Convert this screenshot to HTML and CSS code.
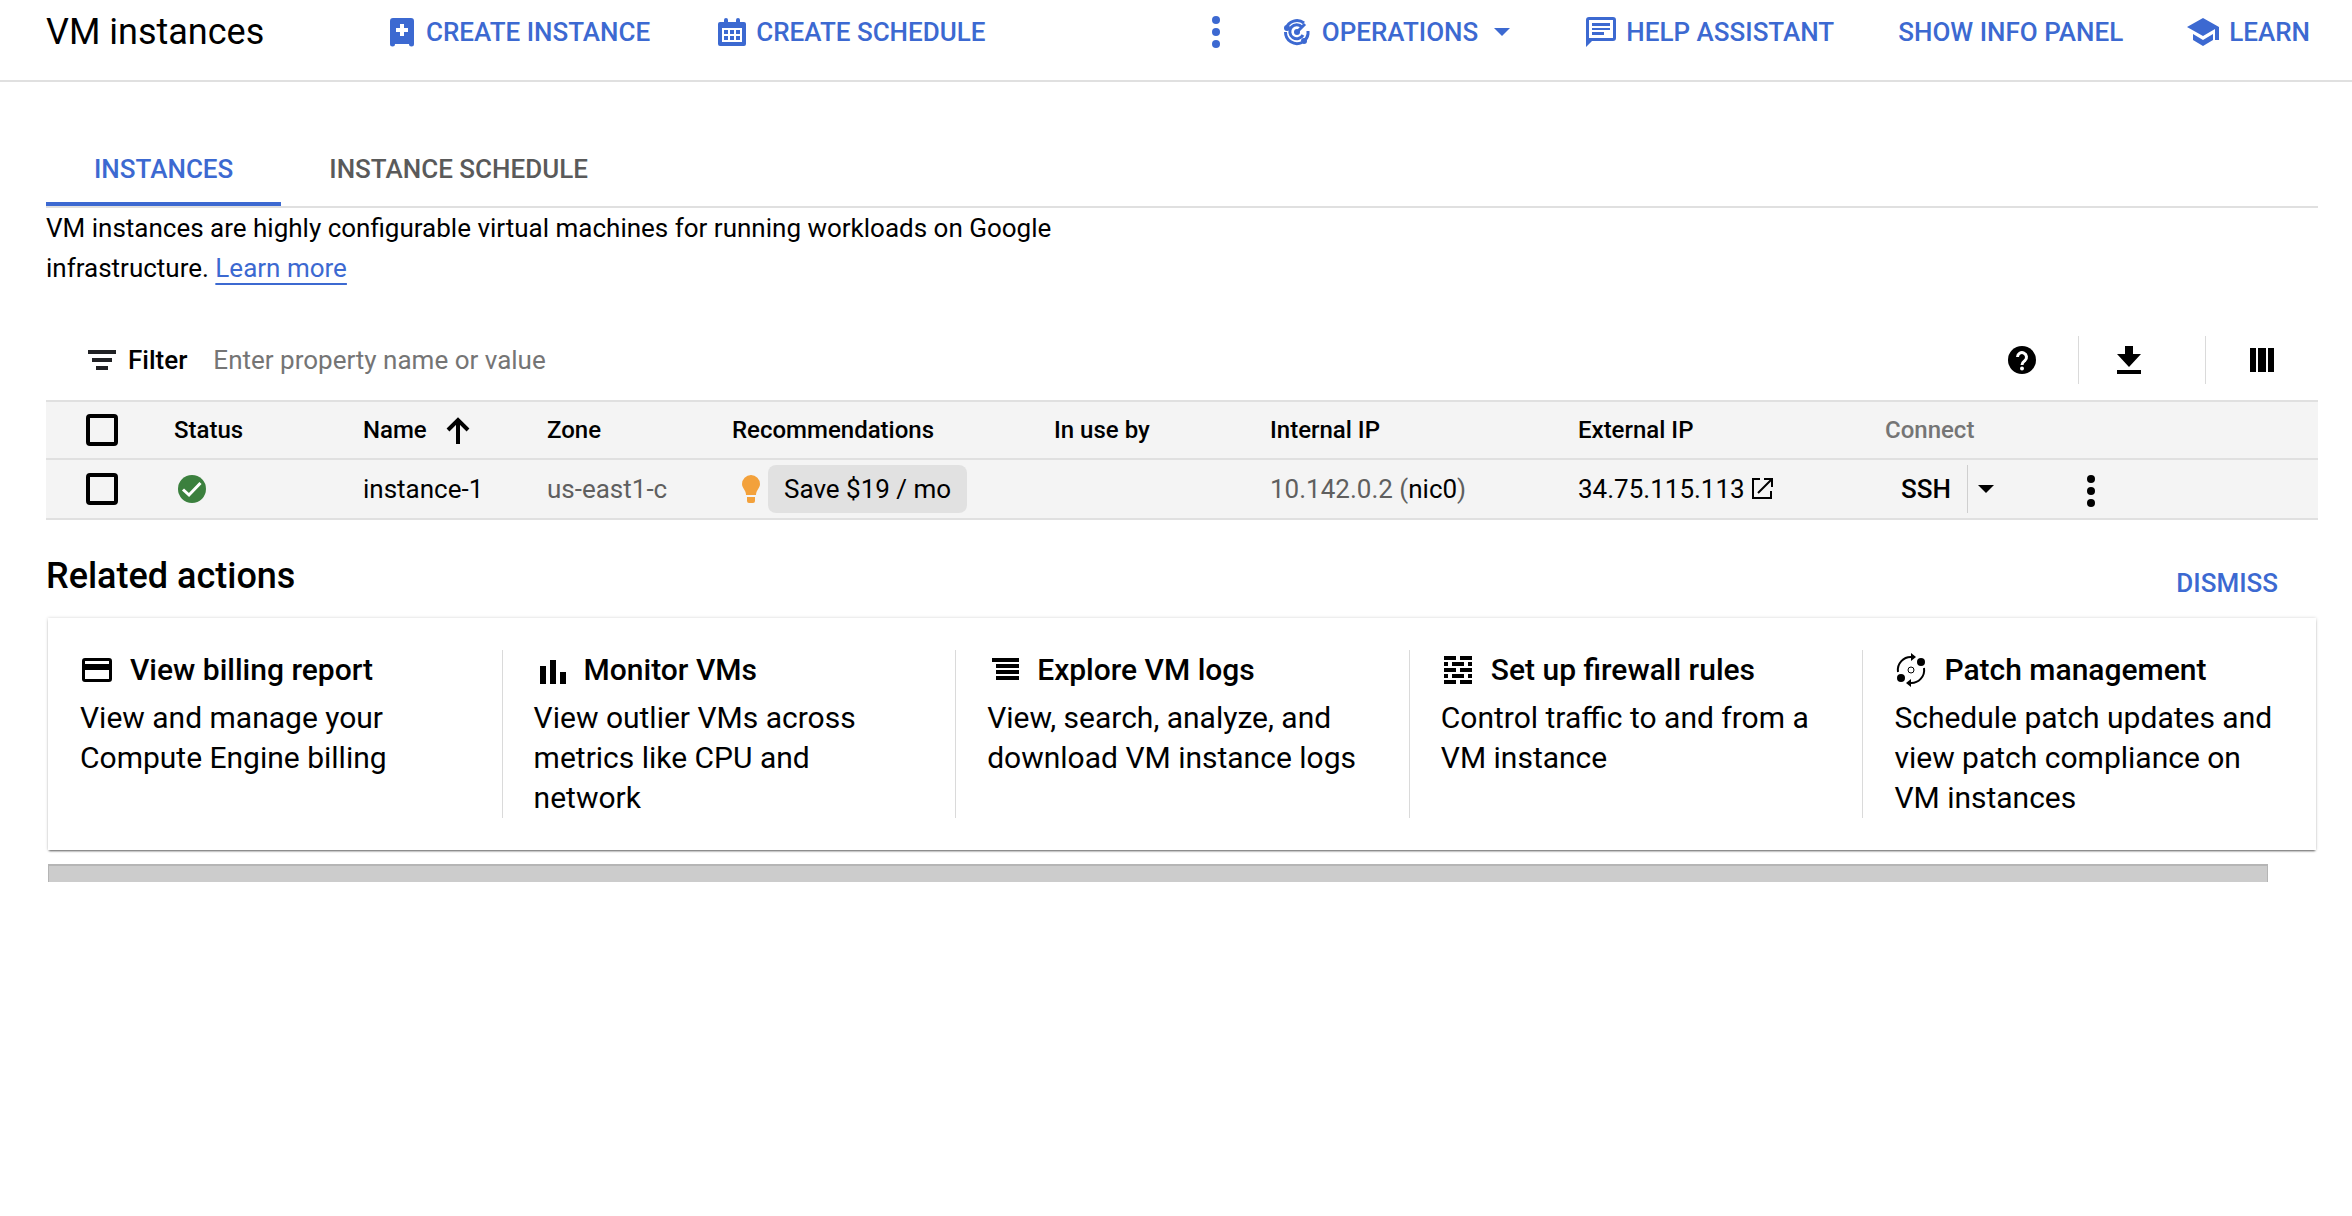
FILE: index.html
```html
<!DOCTYPE html>
<html lang="en">
<head>
<meta charset="utf-8">
<title>VM instances</title>
<meta name="viewport" content="width=device-width, initial-scale=1">
<link rel="stylesheet" href="styles.css">
</head>
<body>
<header class="topbar">
  <h1 class="page-title">VM instances</h1>
  <div class="create-actions">
    <button class="action" type="button">
      <svg class="icon-create" viewBox="0 0 24 28"><path fill="currentColor" fill-rule="evenodd" d="M3 0h18a3 3 0 0 1 3 3v23a2 2 0 0 1-5 0H5a2 2 0 0 1-5 0V3a3 3 0 0 1 3-3zM10 6v4H6v4h4v4h4v-4h4v-4h-4V6z"/></svg>
      CREATE INSTANCE
    </button>
    <button class="action action-tight" type="button">
      <svg class="icon-schedule" viewBox="0 0 28 28"><path fill="currentColor" fill-rule="evenodd" d="M6 4V2a2 2 0 0 1 4 0v2h8V2a2 2 0 0 1 4 0v2h4a2 2 0 0 1 2 2v20a2 2 0 0 1-2 2H2a2 2 0 0 1-2-2V6a2 2 0 0 1 2-2zM4 10v14h20V10zM6 12h4v4H6zM12 12h4v4h-4zM18 12h4v4h-4zM6 18h4v4H6zM12 18h4v4h-4zM18 18h4v4h-4z"/></svg>
      CREATE SCHEDULE
    </button>
  </div>
  <div class="page-actions">
    <button class="action" type="button" aria-label="More actions">
      <svg class="icon-dots" viewBox="0 0 8 32"><g fill="currentColor"><circle cx="4" cy="4" r="4"/><circle cx="4" cy="16" r="4"/><circle cx="4" cy="28" r="4"/></g></svg>
    </button>
    <button class="action operations" type="button">
      <svg class="icon-ops" viewBox="0 0 26 26"><g fill="none" stroke="currentColor" stroke-width="3"><path d="M2 9.500A11.500 11.500 0 0 1 20 4M1.500 13A11.500 11.500 0 0 0 18 23.500M24 12v3a11 11 0 0 1-4 7"/><path d="M18 8A7 7 0 1 0 19 16"/><path d="M13 13l8-8"/></g><g fill="currentColor"><circle cx="13" cy="13" r="3"/><circle cx="3" cy="9" r="3"/><circle cx="20" cy="22" r="3"/></g></svg>
      OPERATIONS
      <svg class="icon-caret" viewBox="0 0 16 8"><path fill="currentColor" d="M0 0h16L8 8z"/></svg>
    </button>
    <button class="action action-tight" type="button">
      <svg class="icon-chat" viewBox="0 0 30 30"><path fill="currentColor" fill-rule="evenodd" d="M3 0h24a3 3 0 0 1 3 3v18a3 3 0 0 1-3 3H6l-6 6V3a3 3 0 0 1 3-3zM3 3v18h24V3zM6 6h18v3H6zM6 11h18v2H6zM6 15h12v3H6z"/></svg>
      HELP ASSISTANT
    </button>
    <button class="action" type="button">SHOW INFO PANEL</button>
    <button class="action action-tight" type="button">
      <svg class="icon-learn" viewBox="0 0 32 28"><path fill="currentColor" d="M16 0l16 9v13h-4V11l-12 7L0 9zM6 16l10 6 10-6v6l-10 6-10-6z"/></svg>
      LEARN
    </button>
  </div>
</header>

<main class="content">
  <nav class="tabs" aria-label="Views">
    <a class="tab tab-active" href="#instances" aria-current="page">INSTANCES</a>
    <a class="tab" href="#schedule">INSTANCE SCHEDULE</a>
  </nav>

  <p class="intro">VM instances are highly configurable virtual machines for running workloads on Google infrastructure. <a class="learn-more" href="#docs">Learn more</a></p>

  <div class="filter-bar">
    <label class="filter-label" for="filter">
      <svg class="icon-filter" viewBox="0 0 28 20"><path fill="#202124" d="M0 0h28v4H0zM4 8h20v4H4zM8 16h12v4H8z"/></svg>
      Filter
    </label>
    <input class="filter-input" id="filter" type="text" placeholder="Enter property name or value">
    <div class="tools">
      <button class="tool" type="button" aria-label="Help">
        <svg class="icon-28" viewBox="0 0 28 28"><circle cx="14" cy="14" r="14"/><path d="M9.500 11a4.500 4.500 0 1 1 7.500 3.500c-2 1.500-3 2-3 4.500" fill="none" stroke="#fff" stroke-width="3"/><circle cx="14" cy="22.500" r="2" fill="#fff"/></svg>
      </button>
      <button class="tool" type="button" aria-label="Download">
        <svg class="icon-download" viewBox="0 0 24 28"><path d="M8 0h8v8h8L12 21 0 8h8zM0 24h24v4H0z"/></svg>
      </button>
      <button class="tool" type="button" aria-label="Column display">
        <svg class="icon-24" viewBox="0 0 24 24"><path d="M0 0h6v24H0zM8 0h8v24H8zM18 0h6v24h-6z"/></svg>
      </button>
    </div>
  </div>

  <table class="instances">
    <colgroup>
      <col class="c-check"><col class="c-status"><col class="c-name"><col class="c-zone"><col class="c-rec"><col class="c-use"><col class="c-int"><col class="c-ext"><col class="c-connect"><col class="c-more">
    </colgroup>
    <thead>
      <tr>
        <th class="check-cell"><input class="check" type="checkbox" aria-label="Select all rows"></th>
        <th>Status</th>
        <th><button class="sort" type="button">Name <svg class="icon-sort" viewBox="0 0 24 27"><path d="M12 27V3M2 13L12 3l10 10" fill="none" stroke="#000" stroke-width="4"/></svg></button></th>
        <th>Zone</th>
        <th>Recommendations</th>
        <th>In use by</th>
        <th>Internal IP</th>
        <th>External IP</th>
        <th class="connect-head">Connect</th>
        <td></td>
      </tr>
    </thead>
    <tbody>
      <tr>
        <td class="check-cell"><input class="check" type="checkbox" aria-label="Select instance-1"></td>
        <td class="status-cell"><svg class="icon-28" viewBox="0 0 28 28" role="img" aria-label="Running"><circle cx="14" cy="14" r="14" fill="#3b803e"/><path d="M5 14.500l6 5.500L22.500 8" fill="none" stroke="#fff" stroke-width="3"/></svg></td>
        <td><a class="plain" href="#instance-1">instance-1</a></td>
        <td class="muted">us-east1-c</td>
        <td><div class="rec"><svg class="icon-bulb" viewBox="0 0 18 28"><path fill="#f3a13b" d="M9 0a9 9 0 0 1 9 9c0 4-4 6-4 11H4C4 15 0 13 0 9a9 9 0 0 1 9-9zM5 22h8v4a2 2 0 0 1-2 2H7a2 2 0 0 1-2-2z"/></svg><button class="chip" type="button">Save $19 / mo</button></div></td>
        <td></td>
        <td class="muted">10.142.0.2 (<a class="plain" href="#nic0">nic0</a>)</td>
        <td><a class="external" href="#external">34.75.115.113 <svg class="icon-open" viewBox="0 0 22 22"><path d="M9 1H2v19h18v-7M13 1h8v8M21 1L7 15" fill="none" stroke="#000" stroke-width="2"/></svg></a></td>
        <td><div class="connect"><button class="ssh" type="button">SSH</button><button class="ssh-menu" type="button" aria-label="SSH options"><svg class="icon-caret" viewBox="0 0 16 8"><path d="M0 0h16L8 8z"/></svg></button></div></td>
        <td><button class="row-more" type="button" aria-label="More row actions"><svg class="icon-dots" viewBox="0 0 8 32"><circle cx="4" cy="4" r="4"/><circle cx="4" cy="16" r="4"/><circle cx="4" cy="28" r="4"/></svg></button></td>
      </tr>
    </tbody>
  </table>

  <section class="related">
    <div class="related-head">
      <h2 class="related-title">Related actions</h2>
      <button class="action dismiss" type="button">DISMISS</button>
    </div>
    <div class="cards">
      <article class="card">
        <h3 class="card-title"><svg class="card-icon" viewBox="0 0 34 30"><path fill-rule="evenodd" d="M5 3h24a3 3 0 0 1 3 3v18a3 3 0 0 1-3 3H5a3 3 0 0 1-3-3V6a3 3 0 0 1 3-3zM5 6v3h24V6zM5 15v9h24v-9z"/></svg>View billing report</h3>
        <p class="card-text">View and manage your Compute Engine billing</p>
      </article>
      <article class="card">
        <h3 class="card-title"><svg class="card-icon" viewBox="0 0 34 30"><path d="M6 11h6v18H6zM16 5h6v24h-6zM26 17h6v12h-6z"/></svg>Monitor VMs</h3>
        <p class="card-text">View outlier VMs across metrics like CPU and network</p>
      </article>
      <article class="card">
        <h3 class="card-title"><svg class="card-icon" viewBox="0 0 34 30"><path d="M5 3h27v4H5zM9 9h23v4H9zM9 15h23v4H9zM9 21h23v4H9z"/></svg>Explore VM logs</h3>
        <p class="card-text">View, search, analyze, and download VM instance logs</p>
      </article>
      <article class="card">
        <h3 class="card-title"><svg class="card-icon" viewBox="0 0 34 30"><path d="M3 1h12v4H3zM19 1h12v4H19zM3 7h4v4H3zM11 7h12v4H11zM27 7h4v4h-4zM3 13h12v4H3zM19 13h12v4H19zM3 19h4v4H3zM11 19h12v4H11zM27 19h4v4h-4zM3 25h12v4H3zM19 25h12v4H19z"/></svg>Set up firewall rules</h3>
        <p class="card-text">Control traffic to and from a VM instance</p>
      </article>
      <article class="card">
        <h3 class="card-title"><svg class="card-icon" viewBox="0 0 34 30"><path d="M4 17A13 13 0 0 1 18 2M30 13A13 13 0 0 1 16 28" fill="none" stroke="#000" stroke-width="2"/><circle cx="17" cy="15" r="3" fill="none" stroke="#000"/><circle cx="27" cy="7" r="4"/><circle cx="7" cy="23" r="4"/><path d="M17-2l5 4-5 4zM17 24l-5 4 5 4z"/></svg>Patch management</h3>
        <p class="card-text">Schedule patch updates and view patch compliance on VM instances</p>
      </article>
    </div>
  </section>
  <div class="scroll-track"><div class="scroll-thumb"></div></div>
</main>
</body>
</html>
```
FILE: styles.css
```css
* { box-sizing: border-box; }
body { margin: 0; background: #fff; color: #000; font: 400 26px/40px Roboto, sans-serif; }
h1, h2, h3, p { margin: 0; }
button { margin: 0; padding: 0; border: 0; background: none; color: inherit; font: inherit; cursor: pointer; }
svg { display: block; flex: none; overflow: visible; }
a { color: inherit; text-decoration: none; }

.topbar { display: flex; align-items: flex-start; height: 82px; padding: 11px 42px 0 46px; border-bottom: 2px solid #e0e0e0; }
.page-title { width: 344px; font-size: 36px; font-weight: 400; line-height: 42px; }
.create-actions { display: flex; gap: 68px; }
.page-actions { display: flex; gap: 64px; margin-left: auto; }
.action { display: flex; align-items: center; gap: 12px; color: #3c69d1; font-weight: 500; line-height: 42px; white-space: nowrap; }
.action-tight { gap: 10px; }
.operations { margin-right: 12px; }
.operations .icon-caret { margin-left: 4px; }

.icon-create { width: 24px; height: 28px; }
.icon-schedule { width: 28px; height: 28px; }
.icon-dots { width: 8px; height: 32px; }
.icon-ops { width: 26px; height: 26px; }
.icon-caret { width: 16px; height: 8px; }
.icon-chat { width: 30px; height: 30px; }
.icon-learn { width: 32px; height: 28px; }
.icon-filter { width: 28px; height: 20px; }
.icon-24 { width: 24px; height: 24px; }
.icon-28 { width: 28px; height: 28px; }
.icon-download { width: 24px; height: 28px; }
.icon-sort { width: 24px; height: 27px; }
.icon-bulb { width: 18px; height: 28px; }
.icon-open { width: 22px; height: 22px; }

.content { padding: 50px 34px 0 46px; }
.tabs { display: flex; height: 76px; border-bottom: 2px solid #e0e0e0; }
.tab { height: 74px; padding: 17px 48px 0; color: #5a5a5a; font-weight: 500; }
.tab-active { border-bottom: 4px solid #3c69d1; color: #3c69d1; }
.intro { max-width: 1040px; }
.learn-more { color: #3c69d1; text-decoration: underline 2px; text-underline-offset: 6px; text-decoration-skip-ink: none; }

.filter-bar { display: flex; align-items: center; height: 112px; padding: 32px 44px 0 42px; }
.filter-label { display: flex; align-items: center; gap: 12px; font-weight: 500; }
.filter-input { flex: 1; min-width: 0; margin-left: 26px; padding: 0; border: 0; outline: 0; background: none; color: #000; font: inherit; }
.filter-input::placeholder { color: #757575; opacity: 1; }
.tools { display: flex; }
.tool { display: flex; align-items: center; justify-content: flex-end; height: 48px; }
.tool + .tool { margin-left: 42px; padding-left: 38px; border-left: 1px solid #dadada; }
.tool + .tool + .tool { margin-left: 64px; padding-left: 44px; }

.instances { width: 100%; border-collapse: collapse; table-layout: fixed; background: #f4f4f4; }
.instances tr { border-top: 2px solid #e0e0e0; border-bottom: 2px solid #e0e0e0; }
.instances th, .instances td { height: 60px; padding: 0; text-align: left; white-space: nowrap; vertical-align: middle; }
.instances thead th, .instances thead td { height: 58px; font-size: 24px; font-weight: 500; }
.instances .check-cell { padding-left: 40px; }
.instances .status-cell { padding-left: 4px; }
.instances .connect-head { color: #757575; }
.instances .muted { color: #5f5f5f; }
.c-check { width: 128px; }
.c-status { width: 189px; }
.c-name { width: 184px; }
.c-zone { width: 185px; }
.c-rec { width: 322px; }
.c-use { width: 216px; }
.c-int { width: 308px; }
.c-ext { width: 307px; }
.c-connect { width: 202px; }
.check { display: block; appearance: none; width: 32px; height: 32px; margin: 0; border: 4px solid #000; border-radius: 4px; }
.sort { display: flex; align-items: center; gap: 19px; font-weight: 500; }
.plain { color: #000; }
.rec { display: flex; align-items: center; gap: 8px; padding-left: 10px; }
.chip { height: 48px; padding: 0 16px; border-radius: 8px; background: #e1e1e1; }
.external { display: flex; align-items: center; gap: 6px; }
.connect { display: flex; align-items: center; padding-left: 16px; }
.ssh { height: 48px; padding-right: 16px; border-right: 1px solid #cfcfcf; font-weight: 500; }
.ssh-menu { height: 48px; padding: 0 10px; }
.row-more { display: block; padding: 4px 0 0; }

.related-head { display: flex; align-items: flex-start; justify-content: space-between; height: 98px; padding: 34px 40px 0 0; }
.related-title { font-size: 36px; font-weight: 500; line-height: 44px; }
.dismiss { padding-top: 8px; }
.cards { display: grid; grid-template-columns: repeat(5, 1fr); margin: 0 2px; padding: 32px 0; box-shadow: 0 2px 2px -1px rgba(0,0,0,.6), 0 0 3px rgba(0,0,0,.18); }
.card { min-height: 168px; padding: 0 31px; border-left: 1px solid #dadada; }
.card:first-child { border-left-color: transparent; }
.card-title { display: flex; align-items: center; gap: 16px; font-size: 30px; font-weight: 500; line-height: 40px; white-space: nowrap; }
.card-icon { width: 34px; height: 30px; }
.card-text { padding-top: 8px; font-size: 30px; line-height: 40px; }
.scroll-track { margin-top: 14px; padding: 0 50px 0 2px; }
.scroll-thumb { height: 18px; border: 1px solid #b5b5b5; border-top-width: 2px; border-bottom: 0; background: #ccc; }
```
